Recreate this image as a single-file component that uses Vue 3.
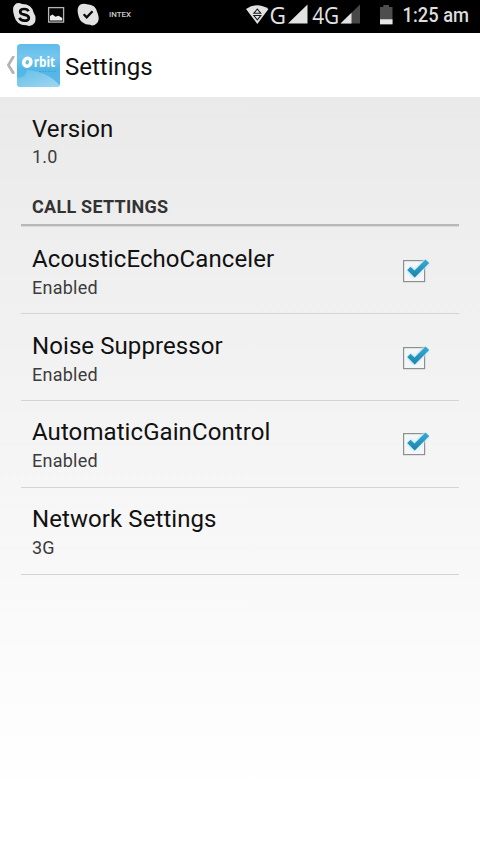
<script setup>
const items = [
  { title: 'AcousticEchoCanceler', summary: 'Enabled', checked: true },
  { title: 'Noise Suppressor', summary: 'Enabled', checked: true },
  { title: 'AutomaticGainControl', summary: 'Enabled', checked: true },
  { title: 'Network Settings', summary: '3G', checked: false },
]
</script>

<template>
  <div class="screen">
    <div class="status">
      <svg class="icons" width="480" height="33" viewBox="0 0 480 33">
        <path d="M15 4.4Q18 2 22 4Q32 4 33.800 13Q37 18 34.500 23Q31 27.500 26.500 25.300Q16.500 25.500 14.200 16Q11.500 8 15 4.400Z" fill="#e2e2e2" />
        <path d="M28.400 11.200Q27.600 9 24.200 9Q20.200 9 20.200 11.700Q20.200 13.800 24.300 14.600Q28.800 15.500 28.800 17.900Q28.800 20.700 24.400 20.700Q20.500 20.700 19.500 17.800" fill="none" stroke="#080808" stroke-width="2.700" />
        <rect x="48.600" y="7.600" width="15" height="14.500" fill="#080808" stroke="#b5b5b5" stroke-width="1.300" />
        <path d="M50 20.500V16L52.500 14.500L55.500 16.700L58.500 15.700L62.300 18V20.500Z" fill="#eee" />
        <path d="M80 4.700Q83.500 3 87 4.200Q96 4.500 97.500 13Q100.500 20 96.500 23.500Q93.500 26.500 90 24.800Q80.500 24.500 78.500 16Q76 8 80 4.700Z" fill="#e2e2e2" />
        <path d="M83.700 14.300L86.700 17.300L92.500 11.300" fill="none" stroke="#080808" stroke-width="2.300" />
        <text x="109" y="17" class="brand" textLength="22" lengthAdjust="spacingAndGlyphs">INTEX</text>
        <path d="M246 9Q257 1.500 268.500 9L257.300 24Z" fill="#e2e2e2" />
        <path d="M253.800 13.300L257.300 9L260.800 13.300ZM253.800 15.500L257.300 19.800L260.800 15.500Z" fill="none" stroke="#181818" stroke-width="1.100" />
        <text x="269.500" y="23.700" class="net" textLength="16.500" lengthAdjust="spacingAndGlyphs">G</text>
        <path d="M288 23.500L307.500 4.500V23.500Z" fill="#e2e2e2" />
        <text x="312.200" y="23.700" class="net" textLength="27" lengthAdjust="spacingAndGlyphs">4G</text>
        <path d="M340.500 23.500L360 4.500V23.500Z" fill="#484848" />
        <path d="M340.500 23.500L351.500 12.800V23.500Z" fill="#e2e2e2" />
        <path d="M380 7H383.300V5H389V7H392.500V24.300H380Z" fill="#4d4d4d" />
        <rect x="380" y="19.300" width="12.500" height="5" fill="#e8e8e8" />
        <text x="402.500" y="22.300" class="time" textLength="66.500" lengthAdjust="spacingAndGlyphs">1:25 am</text>
      </svg>
    </div>

    <header class="bar">
      <svg class="back" width="10" height="22" viewBox="0 0 10 22">
        <path d="M6.200 2H8.500V3.500L4 11L8.500 18V20H6.200L0.800 11Z" fill="#b4b4b4" />
      </svg>
      <svg class="logo" width="43" height="43" viewBox="0 0 43 43">
        <defs>
          <linearGradient id="sky" x1="0" y1="0" x2="0" y2="1">
            <stop offset="0" stop-color="#5fbce9" />
            <stop offset=".3" stop-color="#74c6ee" />
            <stop offset=".6" stop-color="#52b6e6" />
            <stop offset="1" stop-color="#5dbbe7" />
          </linearGradient>
          <linearGradient id="haze" x1="0" y1="0" x2="1" y2="1">
            <stop offset="0" stop-color="#6cc2ea" />
            <stop offset="1" stop-color="#b5e0f4" />
          </linearGradient>
          <clipPath id="tile"><rect width="43" height="43" rx="3.500" /></clipPath>
        </defs>
        <g clip-path="url(#tile)">
          <rect width="43" height="43" fill="url(#sky)" />
          <path d="M10 26Q32 28 43 42V43H0V34Q10 33 10 26Z" fill="url(#haze)" opacity=".75" />
        </g>
        <ellipse cx="10.300" cy="18.300" rx="3.500" ry="4" fill="none" stroke="#fff" stroke-width="3.600" transform="rotate(25 10.300 18.300)" />
        <text x="16.700" y="23" class="orbit" textLength="21.500" lengthAdjust="spacingAndGlyphs">rbit</text>
        <path d="M22 27.500H39" stroke="#3e96c2" stroke-width="0.800" stroke-dasharray="2 1" opacity=".7" />
      </svg>
      <h1>Settings</h1>
    </header>

    <main>
      <section class="version">
        <div class="title">Version</div>
        <div class="summary">1.0</div>
      </section>
      <h2>CALL SETTINGS</h2>
      <div v-for="item in items" :key="item.title" class="row">
        <div>
          <div class="title">{{ item.title }}</div>
          <div class="summary">{{ item.summary }}</div>
        </div>
        <svg v-if="item.checked" class="check" width="30" height="30" viewBox="0 0 30 30">
          <defs>
            <linearGradient id="tick" x1="0" y1="0" x2="0" y2="1">
              <stop offset="0" stop-color="#3aaad3" />
              <stop offset="1" stop-color="#1b83a8" />
            </linearGradient>
            <filter id="glow" x="-30%" y="-30%" width="160%" height="160%"><feGaussianBlur stdDeviation="1.300" /></filter>
          </defs>
          <rect x="1.600" y="5.600" width="21" height="21" fill="#f4f7f8" stroke="#8f8f8f" stroke-width="1.200" />
          <path d="M7 13.500L12.500 19L25 6.500" fill="none" stroke="#bfeaf8" stroke-width="7" filter="url(#glow)" />
          <path d="M5.200 15L8.500 11.700L12.500 15.500L23.500 4.500L27.200 8L12.700 22.500Z" fill="url(#tick)" />
        </svg>
      </div>
    </main>
  </div>
</template>

<style>
body {
  margin: 0;
}
</style>

<style scoped>
.screen {
  width: 480px;
  height: 854px;
  overflow: hidden;
  display: flex;
  flex-direction: column;
  font-family: Roboto, sans-serif;
  color: #111;
  background: #fff;
}
.status {
  height: 33px;
  background: #000;
}
.icons {
  display: block;
}
.brand {
  font: 500 6.500px Roboto, sans-serif;
  fill: #ccc;
}
.net {
  font: 400 23.500px "Open Sans", sans-serif;
  fill: #e2e2e2;
}
.time {
  font: 500 19.500px Roboto, sans-serif;
  fill: #dedede;
}
.bar {
  height: 64px;
  box-sizing: border-box;
  padding-left: 6px;
  display: flex;
  align-items: center;
  background: #fff;
}
.logo {
  margin: 0 0 0 1px;
}
.orbit {
  font: 700 14px "Open Sans", sans-serif;
  fill: #fff;
}
h1 {
  margin: 4px 0 0 5px;
  font-size: 24px;
  font-weight: 400;
  line-height: 28px;
}
main {
  flex: 1;
  padding: 0 21px;
  background: linear-gradient(#eaeaea, #fff 92%);
}
.version {
  box-sizing: border-box;
  padding: 18px 11px 0;
  height: 92px;
}
.title {
  font-size: 24px;
  line-height: 29px;
  letter-spacing: 0.08px;
}
.summary {
  font-size: 18px;
  line-height: 22px;
  letter-spacing: 0.25px;
  margin-top: 2px;
  color: #3c3c3c;
}
h2 {
  margin: 0 0 0.500px;
  height: 35px;
  padding: 0 11px;
  border-bottom: 2px solid #b8b8b8;
  box-shadow: 0 1px #d9d9d9;
  font-size: 18px;
  font-weight: 700;
  line-height: 35px;
  letter-spacing: 0.26px;
  color: #333;
}
.row {
  height: 86.750px;
  box-sizing: border-box;
  padding: 3px 27.500px 0 11px;
  display: flex;
  align-items: center;
  justify-content: space-between;
  border-bottom: 1px solid #d4d4d4;
}
.row:first-of-type {
  margin-top: 1.500px;
}
.check {
  margin-bottom: 4px;
}
.row .summary {
  margin-top: 3px;
}
</style>
